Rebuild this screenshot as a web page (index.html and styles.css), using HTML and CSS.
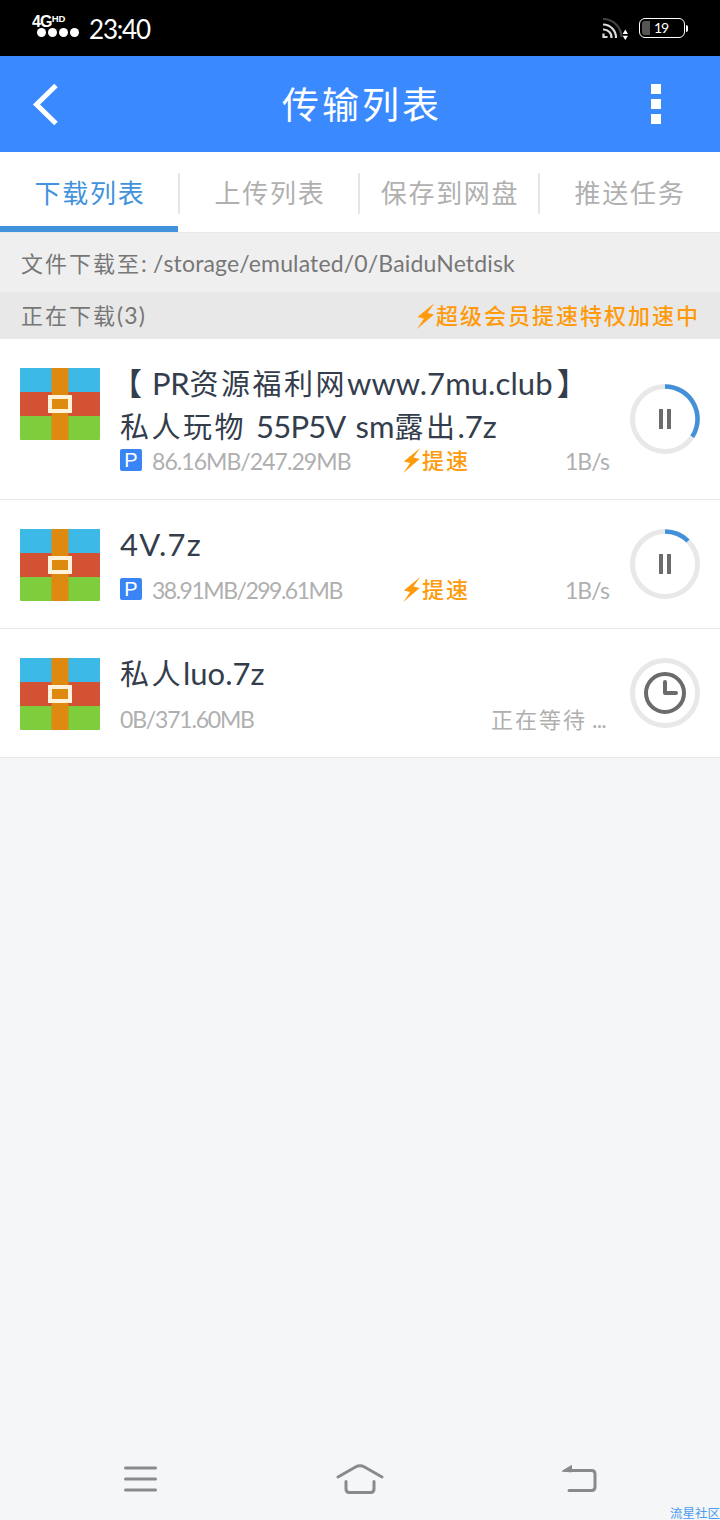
FILE: index.html
```html
<!DOCTYPE html>
<html lang="zh-CN">
<head>
<meta charset="utf-8">
<title>传输列表</title>
<link rel="stylesheet" href="styles.css">
</head>
<body>
<svg class="defs" width="0" height="0">
  <symbol id="archive" viewBox="0 0 80 72">
    <rect width="80" height="72" rx="1" fill="#7dcd3c"/>
    <path d="M1 0H79Q80 0 80 1V24H0V1Q0 0 1 0Z" fill="#3cb9e6"/>
    <rect y="24" width="80" height="24" fill="#d35233"/>
    <rect x="31.5" width="17" height="72" fill="#de8a10"/>
    <rect x="30" y="29" width="20" height="14" fill="#de8a10" stroke="#fff3dc" stroke-width="4"/>
  </symbol>
  <symbol id="bolt" viewBox="0 0 18 26">
    <path d="M17.500 0L0.500 14L7 15.500L0 26L17 11.500L10.500 10Z" fill="#ff9a0c"/>
  </symbol>
</svg>
<div class="screen">
  <div class="status">
    <div class="signal"><div class="net">4G<span class="hd">HD</span></div><div class="dots"><i></i><i></i><i></i><i></i></div></div>
    <div class="clock">23:40</div>
    <svg class="cast" width="28" height="24" viewBox="0 0 28 24" fill="none" stroke-width="2.2">
      <path d="M1 2A18.5 18.5 0 0 1 19.5 20" stroke="#444"/>
      <path d="M1 7.5A13 13 0 0 1 14 21" stroke="#ddd"/>
      <path d="M1 12.5A8 8 0 0 1 9.5 21" stroke="#ddd"/>
      <path d="M1.5 16.5V20H5.5" stroke="#ddd"/>
      <path d="M23.3 12.5L26 17H20.6ZM23.3 23L26 18.7H20.6Z" fill="#fff"/>
    </svg>
    <div class="battery"><div class="level"></div><span>19</span></div>
    <div class="nub"></div>
  </div>
  <div class="header">
    <svg width="28" height="44" viewBox="0 0 28 44" fill="none"><path d="M24 3.500L4.500 22.500L24 41.500" stroke="#fff" stroke-width="5"/></svg>
    <div class="heading">传输列表</div>
    <div class="more"><i></i><i></i><i></i></div>
  </div>
  <div class="tabs">
    <div class="tab active">下载列表</div>
    <div class="tab">上传列表</div>
    <div class="tab">保存到网盘</div>
    <div class="tab">推送任务</div>
  </div>
  <div class="path"><span class="zh">文件下载至</span><span class="dir">: /storage/emulated/0/BaiduNetdisk</span></div>
  <div class="group"><div><span class="zh">正在下载</span><span class="count">(3)</span></div>
    <div class="boost"><svg width="20" height="26"><use href="#bolt"/></svg><span class="zh">超级会员提速特权加速中</span></div></div>

  <div class="item two-line">
    <svg class="file" width="80" height="72"><use href="#archive"/></svg>
    <div class="body">
      <div class="name"><span class="bracket-l">【</span><span class="pr">PR</span><span class="cjk">资源福利网</span><span class="site">www.7mu.club</span><span class="bracket-r">】</span><br><span class="cjk">私人玩物</span><span class="code">55P5V</span><span class="sm">sm</span><span class="cjk">露出</span><span class="ext">.7z</span></div>
      <div class="meta"><b class="badge">P</b><span class="size">86.16MB/247.29MB</span><div class="speedup"><svg width="20" height="25"><use href="#bolt"/></svg><span class="zh">提速</span></div><span class="rate">1B/s</span></div>
    </div>
    <svg class="ring" width="70" height="70" viewBox="0 0 70 70" fill="none">
      <circle cx="35" cy="35" r="32.500" stroke="#e8e8e8" stroke-width="5"/>
      <path d="M35 2.500A32.500 32.500 0 0 1 62.300 52.700" stroke="#4190d9" stroke-width="4.500"/>
      <path d="M31 25V45M39 25V45" stroke="#6b6b6b" stroke-width="4"/>
    </svg>
  </div>
  <div class="item">
    <svg class="file" width="80" height="72"><use href="#archive"/></svg>
    <div class="body">
      <div class="name"><span class="fourv">4V.7z</span></div>
      <div class="meta"><b class="badge">P</b><span class="size second">38.91MB/299.61MB</span><div class="speedup"><svg width="20" height="25"><use href="#bolt"/></svg><span class="zh">提速</span></div><span class="rate">1B/s</span></div>
    </div>
    <svg class="ring" width="70" height="70" viewBox="0 0 70 70" fill="none">
      <circle cx="35" cy="35" r="32.500" stroke="#e8e8e8" stroke-width="5"/>
      <path d="M35 2.500A32.500 32.500 0 0 1 58 12" stroke="#4190d9" stroke-width="4.500"/>
      <path d="M31 25V45M39 25V45" stroke="#6b6b6b" stroke-width="4"/>
    </svg>
  </div>
  <div class="item">
    <svg class="file" width="80" height="72"><use href="#archive"/></svg>
    <div class="body">
      <div class="name"><span class="cjk">私人</span><span class="luo">luo.7z</span></div>
      <div class="meta"><span class="size plain">0B/371.60MB</span><span class="wait"><span class="zh">正在等待</span><span class="ellipsis"> ...</span></span></div>
    </div>
    <svg class="ring" width="70" height="70" viewBox="0 0 70 70" fill="none">
      <circle cx="35" cy="35" r="32.500" stroke="#e8e8e8" stroke-width="5"/>
      <circle cx="35" cy="35" r="19" stroke="#6b6b6b" stroke-width="4"/>
      <path d="M35 24V35H46" stroke="#6b6b6b" stroke-width="4" stroke-linecap="round" stroke-linejoin="round"/>
    </svg>
  </div>

  <div class="nav">
    <svg width="34" height="28" viewBox="0 0 34 28" fill="none" stroke="#888a8c" stroke-width="3" stroke-linecap="round"><path d="M1.500 3H31.500M1.500 14H31.500M1.500 25H31.500"/></svg>
    <svg width="48" height="32" viewBox="0 0 48 32" fill="none" stroke="#888a8c" stroke-width="3" stroke-linecap="round"><path d="M2 14L19.500 4Q24 1.500 28.500 4L46 14M10 18.500V26Q10 29.500 13.500 29.500H34.500Q38 29.500 38 26V18.500"/></svg>
    <svg width="36" height="30" viewBox="0 0 36 30" fill="none" stroke="#888a8c" stroke-width="3" stroke-linecap="round"><path d="M4 6.500H29.500Q33 6.500 33 10V23Q33 26.500 29.500 26.500H7"/><path d="M0.500 7L9.500 1.500V7.500Z" fill="#888a8c" stroke-width="1"/></svg>
  </div>
  <div class="watermark">流星社区</div>
</div>
</body>
</html>
```
FILE: styles.css
```css
* { box-sizing: border-box; }
body { margin: 0; }
.defs { display: block; }
.screen {
  position: relative; width: 720px; height: 1520px; overflow: hidden;
  display: flex; flex-direction: column; background: #f4f6f8;
  font-family: Lato, "Noto Sans CJK SC", sans-serif; font-size: 23px; color: #777;
  white-space: nowrap;
}
.zh { letter-spacing: 2px; font-size: 22px; }

.status { height: 56px; flex: none; background: #000; color: #fff; display: flex; align-items: center; padding: 0 32px; }
.signal { width: 57px; }
.net { font: bold 16px/12px "Liberation Sans", sans-serif; letter-spacing: -0.8px; display: flex; height: 12px; margin-top: -3px; }
.hd { font-size: 9.5px; line-height: 6px; letter-spacing: 0; }
.dots { display: flex; gap: 2px; padding-left: 5px; }
.dots i { width: 9px; height: 9px; border-radius: 50%; background: #fff; }
.clock { font-size: 26px; line-height: 56px; letter-spacing: -1.2px; flex: 1; padding-top: 2px; }
.cast { margin-right: 9px; margin-top: 1px; }
.battery { width: 46px; height: 20px; border: 1.5px solid #fff; border-radius: 6px; display: flex; align-items: center; padding-left: 2px; font-size: 14px; line-height: 16px; letter-spacing: -1px; }
.level { width: 8px; height: 14px; border-radius: 3px 0 0 3px; background: #555; margin-right: 4px; }
.nub { width: 2px; height: 7px; background: #fff; border-radius: 0 2px 2px 0; margin-left: 1px; }

.header { height: 96px; flex: none; background: #3a89ff; color: #fff; display: flex; align-items: center; justify-content: space-between; padding: 0 59px 0 32px; }
.heading { font-size: 37px; letter-spacing: 3px; line-height: 96px; margin-left: 13px; padding-top: 2px; }
.more { display: flex; flex-direction: column; gap: 5px; }
.more i { width: 10px; height: 10px; background: #fff; }

.tabs { height: 81px; flex: none; background: #fff; display: grid; grid-template-columns: repeat(4, 1fr); border-bottom: 1px solid #e8e8e8; }
.tab { position: relative; height: 80px; line-height: 82px; text-align: center; font-size: 26px; letter-spacing: 1.7px; color: #b0b0b0; }
.tab + .tab::before { content: ""; position: absolute; left: -2px; top: 21px; width: 2px; height: 41px; background: #e6e6e6; }
.tab.active { color: #4292dc; }
.tab.active::after { content: ""; position: absolute; left: 0; bottom: 0; width: 178px; height: 6px; background: #4292dc; }

.path { height: 59px; flex: none; line-height: 60px; padding-left: 21px; background: #efefef; }
.dir { letter-spacing: 0.15px; }
.count { letter-spacing: 1.1px; }
.group { height: 47px; flex: none; line-height: 47px; padding: 0 20px 0 21px; background: #e8e8e8; display: flex; justify-content: space-between; }
.boost { display: flex; align-items: center; color: #ff9a0c; font-weight: 500; }

.item { height: 129px; flex: none; background: #fff; border-bottom: 1px solid #e8e8e8; display: flex; padding: 0 20px; }
.item.two-line { height: 161px; }
.file { margin: 29px 20px 0 0; flex: none; }
.body { flex: 1; padding-top: 23px; }
.name { font-size: 31px; line-height: 42px; height: 42px; color: #333d4c; }
.two-line .name { height: 84px; }
.cjk { font-size: 29px; letter-spacing: 2.5px; }
.meta { display: flex; height: 26px; align-items: center; margin-top: 12px; color: #afafaf; line-height: 26px; padding-right: 21px; }
.two-line .meta { margin-top: 2px; }
.badge { width: 22px; height: 22px; border-radius: 2px; background: #3a85f5; color: #fff; font: 20px/22px "Liberation Sans", sans-serif; text-align: center; margin: -2px 10px 0 0; }
.size { width: 250px; letter-spacing: -0.95px; }
.size.second { letter-spacing: -1.5px; }
.size.plain { width: 371px; letter-spacing: -1.2px; }
.speedup { display: flex; align-items: center; color: #ff9a0c; font-weight: 500; }
.speedup svg { margin-top: -2px; }
.rate { margin-left: auto; letter-spacing: -0.9px; }
.wait { flex: none; }
.ellipsis { letter-spacing: -0.8px; }
.ring { align-self: center; flex: none; }
.bracket-l { margin-left: -9px; margin-right: 9px; letter-spacing: 1px; }
.pr { letter-spacing: -0.3px; }
.site { letter-spacing: 0.1px; }
.bracket-r { margin-left: 4px; }
.code { margin: 0 10px 0 10px; letter-spacing: -0.8px; }
.sm { letter-spacing: 0; }
.fourv { letter-spacing: 1.2px; }

.nav { margin-top: auto; height: 84px; flex: none; display: flex; justify-content: space-between; align-items: center; padding: 1px 122px 0 124px; }
.watermark { position: absolute; right: 0; bottom: 0; font-size: 12.5px; line-height: 13px; color: #4a9cf0; }
```
